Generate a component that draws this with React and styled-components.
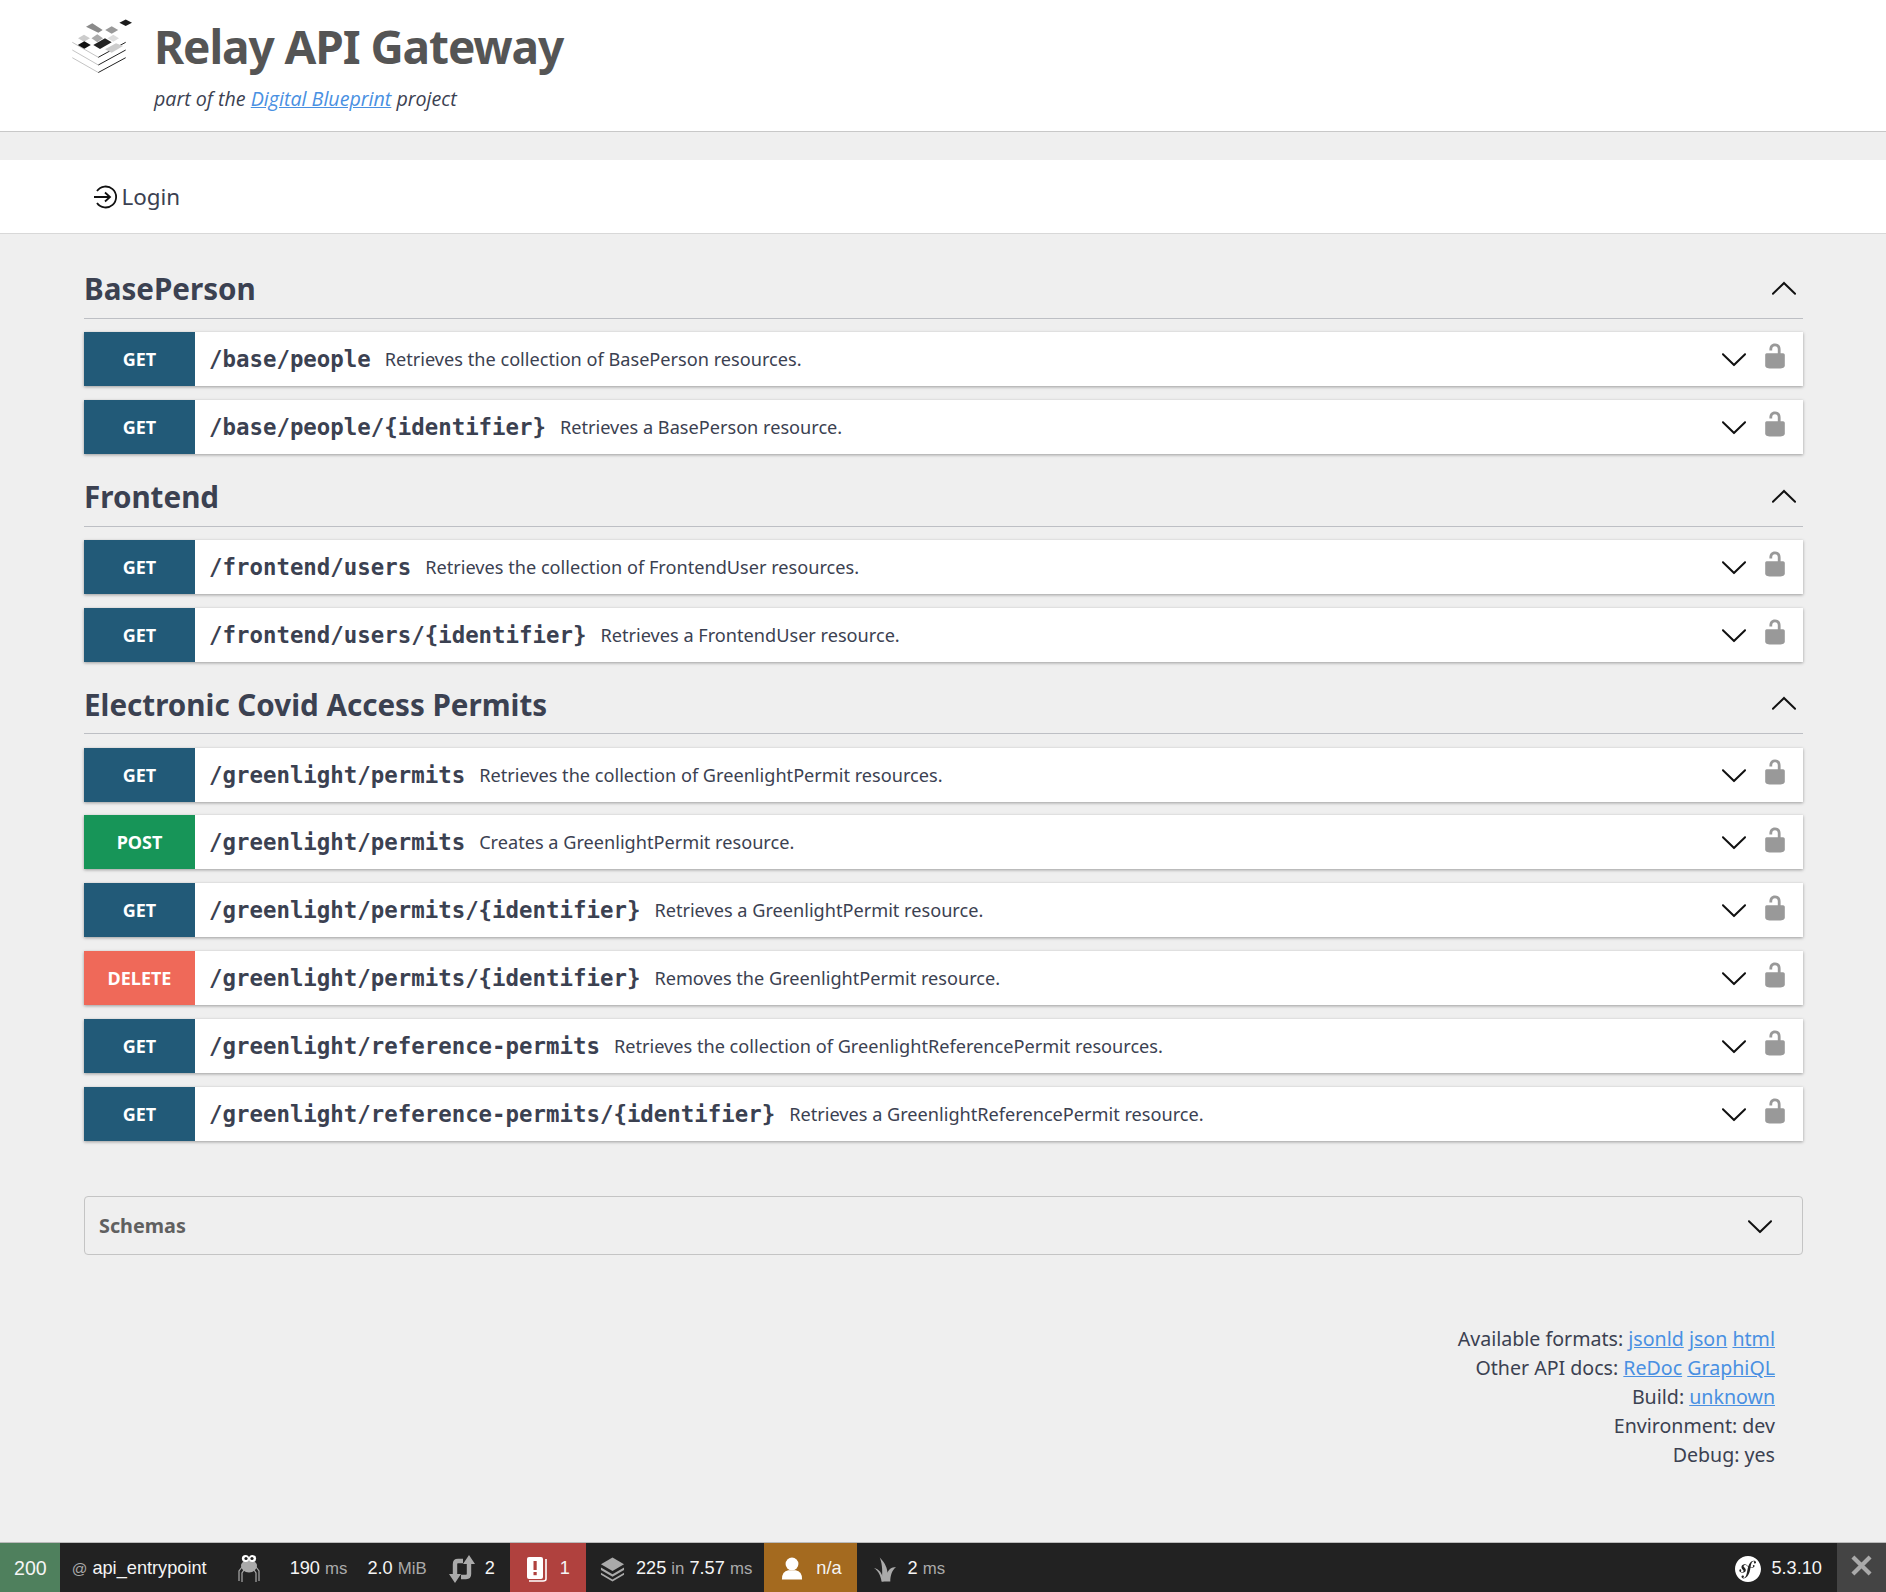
import React from "react";
import styled, { createGlobalStyle } from "styled-components";
import { SiSymfony } from "react-icons/si";

const GlobalStyle = createGlobalStyle`
  html, body { margin: 0; padding: 0; background: #efefef; }
  body { font-family: "Noto Sans", "Open Sans", sans-serif; color: #3b4151; }
  a { color: #4990e2; }
`;

const Page = styled.div`
  width: 1886px;
  height: 1592px;
  display: flex;
  flex-direction: column;
  overflow: hidden;
`;

const Header = styled.header`
  height: 131px;
  background: #fff;
  border-bottom: 1px solid #c8c8c8;
  display: flex;
  padding-left: 70px;
  flex-shrink: 0;
`;

const Logo = styled.svg`
  width: 64px;
  height: 64px;
  margin-top: 16px;
  flex-shrink: 0;
`;

const HeaderText = styled.div`
  margin-left: 20px;
  display: flex;
  flex-direction: column;
`;

const Title = styled.h1`
  margin: 17px 0 0;
  font-family: "Noto Sans", sans-serif;
  font-size: 46px;
  line-height: 58px;
  font-weight: 700;
  color: #555;
  letter-spacing: -1.1px;
`;

const Subtitle = styled.div`
  margin-top: 11px;
  font-family: "Open Sans", sans-serif;
  font-style: italic;
  font-size: 19.65px;
  line-height: 26px;
  color: #3b4151;
`;

const LoginBar = styled.div`
  margin-top: 28px;
  height: 73px;
  background: #fff;
  border-bottom: 1px solid #d8d8d8;
  display: flex;
  align-items: center;
  padding-left: 93px;
  gap: 2.5px;
  flex-shrink: 0;
`;

const LoginLabel = styled.span`
  font-size: 22.4px;
  color: #3b4151;
`;

const Main = styled.main`
  flex: 1;
  padding: 25.8px 83px 0 84px;
  display: flex;
  flex-direction: column;
`;

const TagHeading = styled.div`
  height: 58px;
  border-bottom: 1px solid #bdbfc4;
  display: flex;
  align-items: center;
  justify-content: space-between;
  margin-bottom: 13.2px;
  padding-right: 5px;
`;

const TagTitle = styled.h3`
  margin: 0;
  font-size: 29.6px;
  font-weight: 700;
  color: #3b4151;
`;

const Op = styled.div`
  height: 54px;
  margin-bottom: 13.8px;
  background: #fff;
  display: flex;
  align-items: center;
  box-shadow: 0 1px 3px rgba(0, 0, 0, 0.35);
`;

const Method = styled.div`
  width: 111px;
  height: 100%;
  display: flex;
  align-items: center;
  justify-content: center;
  font-size: 18px;
  font-weight: 700;
  color: #fff;
  flex-shrink: 0;
  background: ${(p) => p.$color};
`;

const Path = styled.span`
  margin-left: 14px;
  font-family: "DejaVu Sans Mono", monospace;
  font-size: 22.4px;
  font-weight: 700;
  color: #3b4151;
`;

const Summary = styled.span`
  margin-left: 14px;
  flex: 1;
  font-size: 18.15px;
  color: #3b4151;
`;

const OpIcons = styled.div`
  display: flex;
  align-items: center;
  gap: 13px;
  padding-right: 14px;
`;

const LockSvg = styled.svg`
  width: 28px;
  height: 28px;
  margin-bottom: 5px;
`;

const Schemas = styled.div`
  margin-top: 42px;
  height: 59px;
  box-sizing: border-box;
  border: 1px solid #c4c4c4;
  border-radius: 4px;
  display: flex;
  align-items: center;
  justify-content: space-between;
  padding: 0 28px 0 14px;
  font-size: 19.8px;
  font-weight: 700;
  color: #606060;
`;

const Info = styled.div`
  margin-top: 69px;
  padding-right: 28px;
  text-align: right;
  font-family: "Noto Sans", sans-serif;
  font-size: 19.6px;
  line-height: 29px;
  color: #3b4151;
`;

const Toolbar = styled.footer`
  height: 50px;
  box-sizing: border-box;
  border-top: 1px solid #bbb;
  background: #222;
  display: flex;
  align-items: stretch;
  flex-shrink: 0;
  font-family: "Liberation Sans", Arial, sans-serif;
  font-size: 18.2px;
  color: #f5f5f5;
`;

const Block = styled.div`
  display: flex;
  align-items: center;
  gap: ${(p) => p.$gap ?? 10}px;
  padding: 2px ${(p) => p.$right ?? 10}px 0 ${(p) => p.$left ?? 10}px;
  background: ${(p) => p.$bg || "transparent"};
`;

const StatusCode = styled.span`
  font-size: 19.6px;
`;

const Spacer = styled.div`
  flex: 1;
`;

const Muted = styled.span`
  color: #aaa;
  font-size: ${(p) => p.$size ?? 16.8}px;
`;

const Arrow = ({ up, size = 28 }) => (
  <svg width={size} height={size} viewBox="0 0 20 20" style={up ? { transform: "rotate(180deg)" } : undefined}>
    <path
      fill="#111"
      d="M17.418 6.109c.272-.268.709-.268.979 0s.271.701 0 .969l-7.908 7.83c-.27.268-.707.268-.979 0l-7.908-7.83c-.27-.268-.27-.701 0-.969.271-.268.709-.268.979 0L10 13.25l7.418-7.141z"
    />
  </svg>
);

const Lock = () => (
  <LockSvg viewBox="0 0 20 20">
    <path
      fill="#999"
      d="M15.8 8H14V5.6C14 2.703 12.665 1 10 1 7.334 1 6 2.703 6 5.6V6h2v-.801C8 3.754 8.797 3 10 3c1.203 0 2 .754 2 2.199V8H4c-.553 0-1 .646-1 1.199V17c0 .549.428 1.139.951 1.307l1.197.387C5.672 18.861 6.55 19 7.1 19h5.8c.549 0 1.428-.139 1.951-.307l1.196-.387c.524-.167.953-.757.953-1.306V9.199C17 8.646 16.352 8 15.8 8z"
    />
  </LockSvg>
);

const BlueprintLogo = () => (
  <Logo viewBox="70 16 64 64">
    <g fill="none" strokeWidth="1">
      <path d="M72.3 42.3 L98.3 57.3" stroke="#c4c4c4" />
      <path d="M72.3 50 L98.3 65" stroke="#c4c4c4" />
      <path d="M72.3 57.7 L98.3 72.5" stroke="#c4c4c4" />
      <path d="M98.3 57.3 L125.7 42.3" stroke="#222" />
      <path d="M98.3 65 L125.7 50" stroke="#222" />
      <path d="M98.3 72.5 L125.7 57.7" stroke="#222" />
    </g>
    <polygon points="125.7,19.4 132,22.7 125.7,26 119.4,22.7" fill="#1c1c1c" />
    <polygon points="92.3,23.3 102.7,30 98.3,32.7 86,26.7" fill="#8a8a8a" />
    <polygon points="111.7,26.3 118.2,30 111.7,33.7 105.2,30" fill="#999" />
    <polygon points="84,34.8 90,38.3 84,41.8 78,38.3" fill="#ccc" />
    <polygon points="97.3,34.3 103,38.3 97.3,42.3 91.5,38.3" fill="#aaa" />
    <polygon points="113.3,34.8 119,38.3 113.3,41.8 107.5,38.3" fill="#ddd" />
    <polygon points="116,43.3 123,46 111.7,52.7 105,49.3" fill="#ccc" />
    <polygon points="105,38.3 111.7,42.3 100,49 93.3,45" fill="#222" />
    <polygon points="84.3,41.3 90.8,45 84.3,48.7 77.8,45" fill="#111" />
  </Logo>
);

const LoginIcon = () => (
  <svg width="26" height="26" viewBox="0 0 26 26" fill="none" stroke="#111" strokeWidth="1.8">
    <path d="M4 7 A10.5 10.5 0 1 1 4 19" />
    <path d="M1 13 H17 M12 8.5 L17 13 L12 17.5" />
  </svg>
);

const SpiderIcon = () => (
  <svg width="24" height="30" viewBox="0 0 24 30">
    <g fill="none" stroke="#aaa" strokeWidth="1.2">
      <path d="M5 13 L2 17 L2 27 M7 16 L5 19 L5 28" />
      <path d="M19 13 L22 17 L22 27 M17 16 L19 19 L19 28" />
    </g>
    <ellipse cx="12" cy="12" rx="8" ry="6.5" fill="#aaa" />
    <circle cx="8.5" cy="4.5" r="3.6" fill="#fff" />
    <circle cx="15.5" cy="4.5" r="3.6" fill="#fff" />
    <circle cx="9" cy="4.5" r="1.6" fill="#222" />
    <circle cx="15" cy="4.5" r="1.6" fill="#222" />
  </svg>
);

const RedirectIcon = () => (
  <svg width="26" height="28" viewBox="0 0 26 28" fill="none" stroke="#aaa" strokeWidth="4.4">
    <path d="M6 21 V9 Q6 6 9 6 H14" />
    <path d="M20 7 V19 Q20 22 17 22 H12" />
    <path d="M0 19 H12 L6 28 Z M14 9 H26 L20 0 Z" fill="#aaa" stroke="none" />
  </svg>
);

const LogIcon = () => (
  <svg width="22" height="26" viewBox="0 0 22 26">
    <path d="M20 3 V23 Q20 25 17 25 H3" fill="none" stroke="#fff" strokeWidth="1.6" />
    <rect x="1" y="1" width="16" height="22" rx="2" fill="#fff" />
    <rect x="7.5" y="5" width="3.2" height="9" fill="#b0413e" />
    <rect x="7.5" y="16" width="3.2" height="3.2" fill="#b0413e" />
  </svg>
);

const StackIcon = () => (
  <svg width="25" height="26" viewBox="0 0 26 26" fill="#aaa">
    <polygon points="13,1 25,8 13,15 1,8" />
    <polygon points="1,11.5 13,18.5 25,11.5 25,14 13,21 1,14" />
    <polygon points="1,17 13,24 25,17 25,19 13,26 1,19" />
  </svg>
);

const UserIcon = () => (
  <svg width="22" height="25" viewBox="0 0 24 26" fill="#fff">
    <circle cx="12" cy="8" r="7" />
    <path d="M1 25 Q1 16 8 15 H16 Q23 16 23 25 Z" />
  </svg>
);

const LeafIcon = () => (
  <svg width="23" height="26" viewBox="0 0 24 26" fill="#aaa">
    <path d="M8 26 C9 18 9 8 6 1 C12 7 14 13 14 17 C15 14 18 11 23 11 C19 14 17 20 17 26 Z" />
    <path d="M8 26 C7 21 5 15 0 12 C5 13 9 17 10 26 Z" />
  </svg>
);

const GET = "#225a78";
const POST = "#179558";
const DELETE = "#ef6959";

const tags = [
  {
    name: "BasePerson",
    ops: [
      ["GET", GET, "/base/people", "Retrieves the collection of BasePerson resources."],
      ["GET", GET, "/base/people/{identifier}", "Retrieves a BasePerson resource."],
    ],
  },
  {
    name: "Frontend",
    ops: [
      ["GET", GET, "/frontend/users", "Retrieves the collection of FrontendUser resources."],
      ["GET", GET, "/frontend/users/{identifier}", "Retrieves a FrontendUser resource."],
    ],
  },
  {
    name: "Electronic Covid Access Permits",
    ops: [
      ["GET", GET, "/greenlight/permits", "Retrieves the collection of GreenlightPermit resources."],
      ["POST", POST, "/greenlight/permits", "Creates a GreenlightPermit resource."],
      ["GET", GET, "/greenlight/permits/{identifier}", "Retrieves a GreenlightPermit resource."],
      ["DELETE", DELETE, "/greenlight/permits/{identifier}", "Removes the GreenlightPermit resource."],
      ["GET", GET, "/greenlight/reference-permits", "Retrieves the collection of GreenlightReferencePermit resources."],
      ["GET", GET, "/greenlight/reference-permits/{identifier}", "Retrieves a GreenlightReferencePermit resource."],
    ],
  },
];

export default function App() {
  return (
    <Page>
      <GlobalStyle />
      <Header>
        <BlueprintLogo />
        <HeaderText>
          <Title>Relay API Gateway</Title>
          <Subtitle>
            part of the <a href="#blueprint">Digital Blueprint</a> project
          </Subtitle>
        </HeaderText>
      </Header>

      <LoginBar>
        <LoginIcon />
        <LoginLabel>Login</LoginLabel>
      </LoginBar>

      <Main>
        {tags.map((tag) => (
          <section key={tag.name}>
            <TagHeading>
              <TagTitle>{tag.name}</TagTitle>
              <Arrow up />
            </TagHeading>
            {tag.ops.map((op, i) => (
              <Op key={i}>
                <Method $color={op[1]}>{op[0]}</Method>
                <Path>{op[2]}</Path>
                <Summary>{op[3]}</Summary>
                <OpIcons>
                  <Arrow />
                  <Lock />
                </OpIcons>
              </Op>
            ))}
          </section>
        ))}

        <Schemas>
          <span>Schemas</span>
          <Arrow />
        </Schemas>

        <Info>
          <div>
            Available formats: <a href="#jsonld">jsonld</a> <a href="#json">json</a> <a href="#html">html</a>
          </div>
          <div>
            Other API docs: <a href="#redoc">ReDoc</a> <a href="#graphiql">GraphiQL</a>
          </div>
          <div>
            Build: <a href="#build">unknown</a>
          </div>
          <div>Environment: dev</div>
          <div>Debug: yes</div>
        </Info>
      </Main>

      <Toolbar>
        <Block $bg="#4f805d" $left={14} $right={13}><StatusCode>200</StatusCode></Block>
        <Block $left={12} $right={12}><span><Muted $size={15.4}>@</Muted> api_entrypoint</span></Block>
        <Block $left={18} $right={22}><SpiderIcon /></Block>
        <Block $left={7} $right={10}><span>190 <Muted>ms</Muted></span></Block>
        <Block $left={10} $right={11}><span>2.0 <Muted>MiB</Muted></span></Block>
        <Block $left={11} $right={15}><RedirectIcon />2</Block>
        <Block $bg="#b0413e" $left={16} $right={16} $gap={12}><LogIcon />1</Block>
        <Block $left={14} $right={12} $gap={11}><StackIcon /><span>225 <Muted>in</Muted> 7.57 <Muted>ms</Muted></span></Block>
        <Block $bg="#a46a1f" $left={17} $right={15} $gap={13}><UserIcon />n/a</Block>
        <Block $left={17} $gap={11}><LeafIcon /><span>2 <Muted>ms</Muted></span></Block>
        <Spacer />
        <Block $right={15}>
          <SiSymfony size={26} color="#fff" />
          5.3.10
        </Block>
        <Block $bg="#444" $left={14} $right={14}>
          <svg width="21" height="21" viewBox="0 0 22 22" stroke="#aaa" strokeWidth="4.4" style={{ marginBottom: 6 }}>
            <path d="M2 2 L20 20 M20 2 L2 20" />
          </svg>
        </Block>
      </Toolbar>
    </Page>
  );
}
